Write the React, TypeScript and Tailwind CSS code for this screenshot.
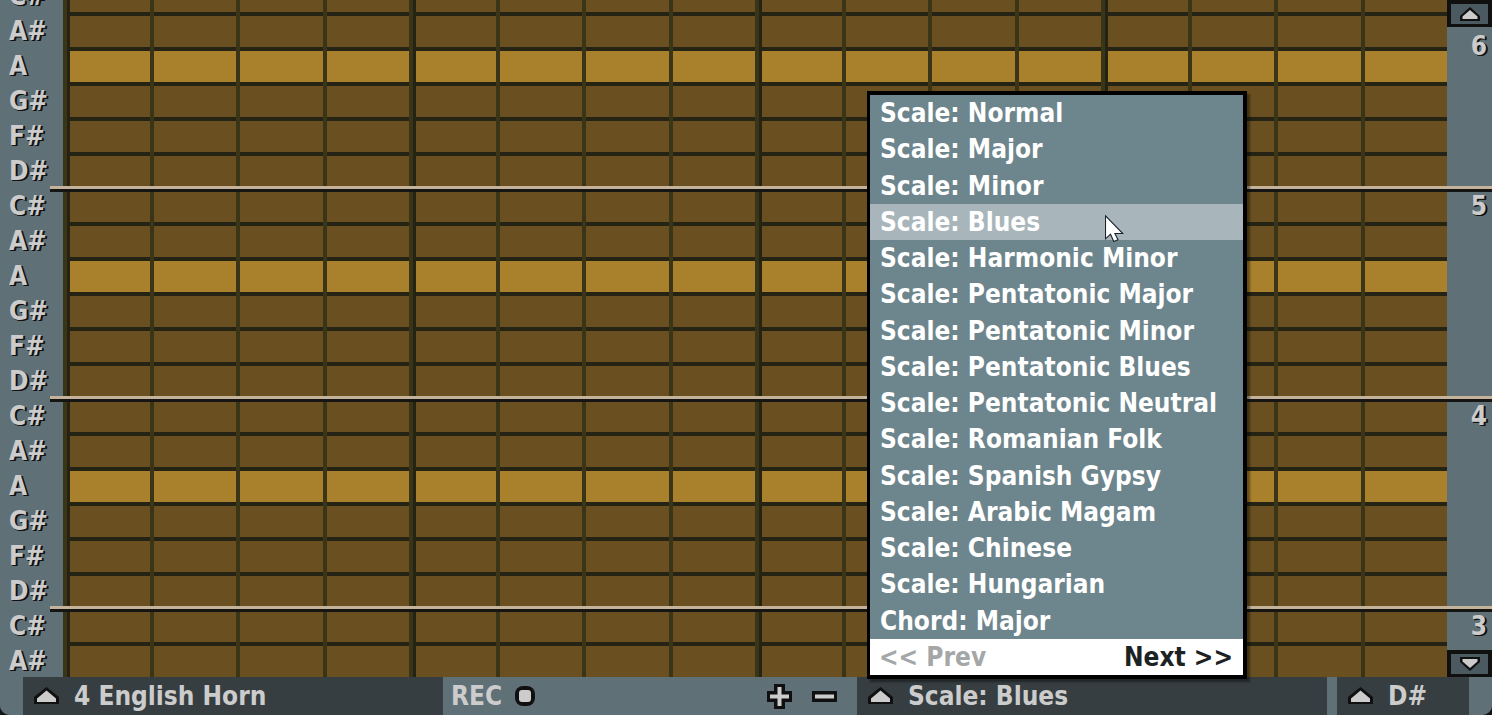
const NOTES = ['C#', 'A#', 'A', 'G#', 'F#', 'D#']
const ROWS = Array.from({ length: 20 }, (_, i) => NOTES[i % NOTES.length])
const STEPS = Array.from({ length: 16 }, (_, i) => i)

const PRESETS = [
  'Scale: Normal',
  'Scale: Major',
  'Scale: Minor',
  'Scale: Blues',
  'Scale: Harmonic Minor',
  'Scale: Pentatonic Major',
  'Scale: Pentatonic Minor',
  'Scale: Pentatonic Blues',
  'Scale: Pentatonic Neutral',
  'Scale: Romanian Folk',
  'Scale: Spanish Gypsy',
  'Scale: Arabic Magam',
  'Scale: Chinese',
  'Scale: Hungarian',
  'Chord: Major',
]

function UpIcon() {
  return (
    <svg width="25" height="18" viewBox="0 0 25 18" className="shrink-0" aria-hidden="true">
      <path d="M12.500 0 25 10v7H0v-7z" fill="#101010" />
      <path d="M12.500 3.500 22 11.500V15H3v-3.500z" fill="#ccc" />
    </svg>
  )
}

function ScrollButton({ down = false }: { down?: boolean }) {
  return (
    <button
      type="button"
      aria-label={down ? 'Scroll down' : 'Scroll up'}
      className="flex h-[27px] shrink-0 items-center justify-center border-x-4 border-t-4 border-b-[3px] border-[#101010] bg-[#4b5a60]"
    >
      <svg width="20" height="14" viewBox="0 0 20 14" className={down ? 'rotate-180' : ''} aria-hidden="true">
        <path d="M10 0 20 9v5H0V9z" fill="#101010" />
        <path d="M10 3 17.500 9.500V12h-15V9.500z" fill="#ccc" />
      </svg>
    </button>
  )
}

function NoteRow({ note }: { note: string }) {
  const fill = note === 'A' ? 'bg-[#a9802c]' : 'bg-[#6a5020]'
  return (
    <div className="relative flex h-[35px] shrink-0">
      <div className="w-[63px] shrink-0 pl-[9px] leading-[39px] text-[#ccc] [text-shadow:1px_1px_0_#111,2px_1px_0_#111]">{note}</div>
      <div className="grid flex-1 grid-cols-16">
        {STEPS.map((s) => (
          <div key={s} className="flex">
            <div className="w-1 bg-[#3b3517]" />
            {s % 4 === 0 && <div className="w-[3px] bg-[#252313]" />}
            <div className={`flex-1 border-t-4 border-[#252313] ${fill}`} />
          </div>
        ))}
      </div>
      {note === 'C#' && (
        <div className="absolute -top-px -right-[45px] left-[50px] z-10 h-[6px] border-t-[3px] border-[#c4b29b] bg-[#151513]" />
      )}
    </div>
  )
}

function OctaveRail() {
  const mark = 'pr-[5px] text-right leading-[39px] text-[#ccc] [text-shadow:1px_1px_0_#111,2px_1px_0_#111]'
  return (
    <div className="flex w-[45px] shrink-0 flex-col">
      <ScrollButton />
      <div className={`flex-1 ${mark}`}>6</div>
      <div className={`h-[210px] ${mark}`}>5</div>
      <div className={`h-[210px] ${mark}`}>4</div>
      <div className={`h-[43px] ${mark}`}>3</div>
      <ScrollButton down />
    </div>
  )
}

function Cursor() {
  return (
    <svg width="19" height="28" viewBox="0 0 19 28" className="absolute top-[11px] left-[235px]" aria-hidden="true">
      <path d="M.5.8v23l5-4.600 3.300 7.300 4.200-1.800-3.100-6.200H17.800z" fill="#fff" stroke="#1c222c" strokeWidth="1.100" />
    </svg>
  )
}

function PresetMenu() {
  return (
    <div className="absolute right-0 bottom-full z-20 -mb-[2px] grid h-[588px] w-[380px] grid-rows-[repeat(16,minmax(0,1fr))] border-4 border-l-[3px] border-black bg-[#6d858c] text-white shadow-[3px_3px_2px_rgba(0,0,0,0.4)]">
      {PRESETS.map((p) => (
        <button
          key={p}
          type="button"
          className={`relative flex items-center pl-[10px] text-left whitespace-nowrap ${p === 'Scale: Blues' ? 'bg-[#a8b6bb]' : ''}`}
        >
          {p}
          {p === 'Scale: Blues' && <Cursor />}
        </button>
      ))}
      <div className="flex items-center justify-between bg-white pr-[10px] pl-[9px]">
        <button type="button" className="text-[#a4a7a8]">&lt;&lt; Prev</button>
        <button type="button" className="text-[#1b2224]">Next &gt;&gt;</button>
      </div>
    </div>
  )
}

export default function App() {
  const slot = 'flex h-full items-center bg-[#363e41] pl-[11px] whitespace-nowrap'
  return (
    <div className="h-screen bg-[#151515] font-['DejaVu_Sans_Condensed','DejaVu_Sans',sans-serif] text-[26px] leading-[36px] font-bold">
      <div className="flex h-full flex-col overflow-hidden rounded-b-[10px] bg-[#607077]">
        <main className="flex min-h-0 flex-1">
          <div className="flex flex-1 flex-col justify-end">
            {ROWS.map((n, i) => (
              <NoteRow key={i} note={n} />
            ))}
          </div>
          <OctaveRail />
        </main>
        <footer className="relative z-20 flex h-[38px] shrink-0 items-center bg-[#607077] pr-[23px] pl-[23px] text-[#ccc] [text-shadow:1px_1px_0_#111,2px_1px_0_#111]">
          <button type="button" className={`w-[420px] gap-[15px] ${slot}`}>
            <UpIcon />
            4 English Horn
          </button>
          <div className="flex flex-1 items-center pr-5 pl-2">
            <button type="button" className="flex items-center gap-[13px]">
              REC
              <svg width="20" height="20" viewBox="0 0 20 20" aria-hidden="true">
                <rect width="20" height="20" rx="8" fill="#101010" />
                <rect x="4" y="4" width="12" height="12" rx="3" fill="#ccc" />
              </svg>
            </button>
            <div className="ml-auto flex items-center gap-5">
              <button type="button" aria-label="Zoom in">
                <svg width="25" height="25" viewBox="0 0 25 25" className="block" aria-hidden="true">
                  <path d="M7 0h11v7h7v11h-7v7H7v-7H0V7h7z" fill="#101010" />
                  <path d="M10.500 3h4v7.500H22v4h-7.500V22h-4v-7.500H3v-4h7.500z" fill="#ccc" />
                </svg>
              </button>
              <button type="button" aria-label="Zoom out">
                <svg width="25" height="11" viewBox="0 0 25 11" className="block" aria-hidden="true">
                  <path d="M0 0h25v11H0z" fill="#101010" />
                  <path d="M3 3.500h19v4H3z" fill="#ccc" />
                </svg>
              </button>
            </div>
          </div>
          <div className="relative h-full w-[470px]">
            <button type="button" className={`w-full gap-[15px] ${slot}`}>
              <UpIcon />
              Scale: Blues
            </button>
            <div className="absolute top-0 right-[80px] [text-shadow:none]">
              <PresetMenu />
            </div>
          </div>
          <button type="button" className={`ml-[10px] w-[132px] gap-[15px] ${slot}`}>
            <UpIcon />
            D#
          </button>
        </footer>
      </div>
    </div>
  )
}
